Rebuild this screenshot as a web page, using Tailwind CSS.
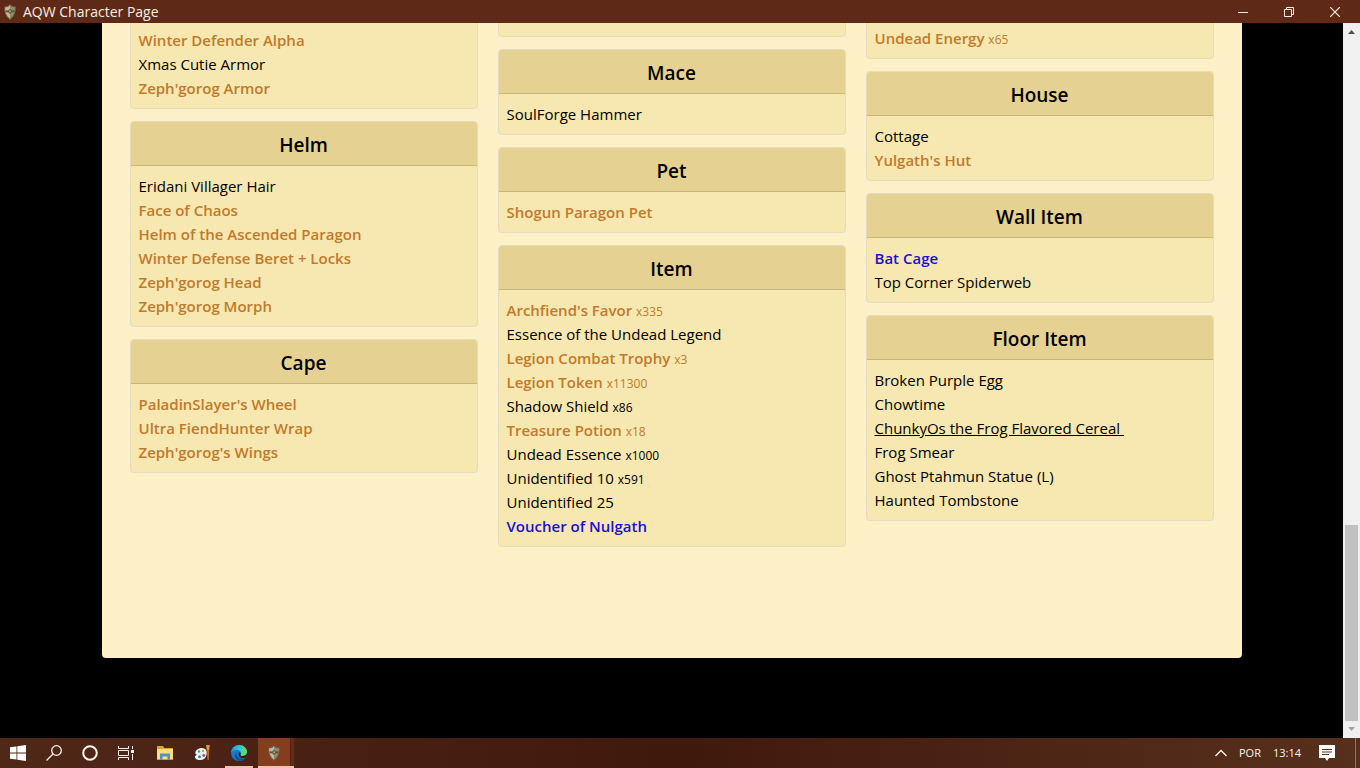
<!DOCTYPE html>
<html lang="pt">
<head>
  <meta charset="UTF-8">
  <meta name="viewport" content="width=device-width, initial-scale=1.0">
  <title>AQW Character Page</title>
  <script src="https://cdn.jsdelivr.net/npm/@tailwindcss/browser@4"></script>
</head>
<body class="flex h-screen flex-col overflow-hidden bg-black font-['Open_Sans','Noto_Sans',sans-serif] text-[15px] text-black">

  <!-- Title bar -->
  <header class="flex h-[23px] shrink-0 items-center bg-[#5e2a17] pr-[2px] text-[#fbeee0]">
    <svg class="ml-[3px] h-4 w-3.5" viewBox="0 0 14 16">
      <path d="M7 0 9 1.700 13 2.800C13 8.500 11.500 13 7 16 2.500 13 1 8.500 1 2.800L5 1.700Z" fill="#7a5a38"/>
      <path d="M7 1.300V14.700C3.500 12.300 2 8.500 2 3.600L5.400 2.700Z" fill="#bdb8a2"/>
      <path d="M7 1.300V14.700C10.500 12.300 12 8.500 12 3.600L8.600 2.700Z" fill="#8d8b78"/>
      <path d="M2.300 6.200 5 6.600 7 4.800 9 6.600 11.700 6.200 11.200 8.200 8.800 8.200 7 10 5.200 8.200 2.800 8.200Z" fill="#5f5335"/>
      <path d="M7 6 8.200 7.300 7 8.600 5.800 7.300Z" fill="#c9a65a"/>
    </svg>
    <h1 class="ml-1.5 flex-1 text-sm">AQW Character Page</h1>
    <button class="flex h-full w-[46px] items-center justify-center" aria-label="Minimize">
      <svg class="h-2.5 w-2.5" viewBox="0 0 10 10" stroke="currentColor"><path d="M0 5.500H10"/></svg>
    </button>
    <button class="flex h-full w-[46px] items-center justify-center" aria-label="Restore">
      <svg class="h-2.5 w-2.5" viewBox="0 0 10 10" fill="none" stroke="currentColor"><path d="M.5 2.500H7.500V9.500H.5ZM2.500 2.500V.5H9.500V7.500H7.500"/></svg>
    </button>
    <button class="flex h-full w-[46px] items-center justify-center" aria-label="Close">
      <svg class="h-2.5 w-2.5" viewBox="0 0 10 10" fill="none" stroke="currentColor" stroke-width="1.2"><path d="M0 0 10 10M10 0 0 10"/></svg>
    </button>
  </header>

  <div class="flex min-h-0 flex-1">
    <!-- Inventory -->
    <main class="min-w-0 flex-1 overflow-hidden">
      <div class="mx-auto grid w-full max-w-[1140px] grid-cols-3 items-start gap-5 rounded-b bg-[#fef0c6] px-7 pb-[111px]">

        <div class="flex flex-col gap-3">
          <section class="rounded-b border border-t-0 border-[#e3dcc0] bg-[#f7e7b1] px-2 pt-[5px] pb-2">
            <ul class="leading-6">
              <li><a href="#" class="font-semibold text-[#c17a2b]">Winter Defender Alpha</a></li>
              <li><a href="#">Xmas Cutie Armor</a></li>
              <li><a href="#" class="font-semibold text-[#c17a2b]">Zeph'gorog Armor</a></li>
            </ul>
          </section>
          <section class="rounded border border-[#e3dcc0] bg-[#f7e7b1]">
            <h2 class="h-11 rounded-t border-b border-[#c8b67c] bg-[#e5d292] text-center text-[19px] leading-[46px] font-semibold">Helm</h2>
            <ul class="p-2 leading-6">
              <li><a href="#">Eridani Villager Hair</a></li>
              <li><a href="#" class="font-semibold text-[#c17a2b]">Face of Chaos</a></li>
              <li><a href="#" class="font-semibold text-[#c17a2b]">Helm of the Ascended Paragon</a></li>
              <li><a href="#" class="font-semibold text-[#c17a2b]">Winter Defense Beret + Locks</a></li>
              <li><a href="#" class="font-semibold text-[#c17a2b]">Zeph'gorog Head</a></li>
              <li><a href="#" class="font-semibold text-[#c17a2b]">Zeph'gorog Morph</a></li>
            </ul>
          </section>
          <section class="rounded border border-[#e3dcc0] bg-[#f7e7b1]">
            <h2 class="h-11 rounded-t border-b border-[#c8b67c] bg-[#e5d292] text-center text-[19px] leading-[46px] font-semibold">Cape</h2>
            <ul class="p-2 leading-6">
              <li><a href="#" class="font-semibold text-[#c17a2b]">PaladinSlayer's Wheel</a></li>
              <li><a href="#" class="font-semibold text-[#c17a2b]">Ultra FiendHunter Wrap</a></li>
              <li><a href="#" class="font-semibold text-[#c17a2b]">Zeph'gorog's Wings</a></li>
            </ul>
          </section>
        </div>

        <div class="flex flex-col gap-3">
          <section class="h-3.5 rounded-b border border-t-0 border-[#e3dcc0] bg-[#f7e7b1]"></section>
          <section class="rounded border border-[#e3dcc0] bg-[#f7e7b1]">
            <h2 class="h-11 rounded-t border-b border-[#c8b67c] bg-[#e5d292] text-center text-[19px] leading-[46px] font-semibold">Mace</h2>
            <ul class="p-2 leading-6">
              <li><a href="#">SoulForge Hammer</a></li>
            </ul>
          </section>
          <section class="rounded border border-[#e3dcc0] bg-[#f7e7b1]">
            <h2 class="h-11 rounded-t border-b border-[#c8b67c] bg-[#e5d292] text-center text-[19px] leading-[46px] font-semibold">Pet</h2>
            <ul class="p-2 leading-6">
              <li><a href="#" class="font-semibold text-[#c17a2b]">Shogun Paragon Pet</a></li>
            </ul>
          </section>
          <section class="rounded border border-[#e3dcc0] bg-[#f7e7b1]">
            <h2 class="h-11 rounded-t border-b border-[#c8b67c] bg-[#e5d292] text-center text-[19px] leading-[46px] font-semibold">Item</h2>
            <ul class="p-2 leading-6">
              <li class="text-[#c17a2b]"><a href="#" class="font-semibold">Archfiend's Favor</a> <span class="text-xs">x335</span></li>
              <li><a href="#">Essence of the Undead Legend</a></li>
              <li class="text-[#c17a2b]"><a href="#" class="font-semibold">Legion Combat Trophy</a> <span class="text-xs">x3</span></li>
              <li class="text-[#c17a2b]"><a href="#" class="font-semibold">Legion Token</a> <span class="text-xs">x11300</span></li>
              <li><a href="#">Shadow Shield</a> <span class="text-xs">x86</span></li>
              <li class="text-[#c17a2b]"><a href="#" class="font-semibold">Treasure Potion</a> <span class="text-xs">x18</span></li>
              <li><a href="#">Undead Essence</a> <span class="text-xs">x1000</span></li>
              <li><a href="#">Unidentified 10</a> <span class="text-xs">x591</span></li>
              <li><a href="#">Unidentified 25</a></li>
              <li><a href="#" class="font-semibold text-[#1a10d8]">Voucher of Nulgath</a></li>
            </ul>
          </section>
        </div>

        <div class="flex flex-col gap-3">
          <section class="rounded-b border border-t-0 border-[#e3dcc0] bg-[#f7e7b1] px-2 pt-[3px] pb-2">
            <ul class="leading-6">
              <li class="text-[#c17a2b]"><a href="#" class="font-semibold">Undead Energy</a> <span class="text-xs">x65</span></li>
            </ul>
          </section>
          <section class="rounded border border-[#e3dcc0] bg-[#f7e7b1]">
            <h2 class="h-11 rounded-t border-b border-[#c8b67c] bg-[#e5d292] text-center text-[19px] leading-[46px] font-semibold">House</h2>
            <ul class="p-2 leading-6">
              <li><a href="#">Cottage</a></li>
              <li><a href="#" class="font-semibold text-[#c17a2b]">Yulgath's Hut</a></li>
            </ul>
          </section>
          <section class="rounded border border-[#e3dcc0] bg-[#f7e7b1]">
            <h2 class="h-11 rounded-t border-b border-[#c8b67c] bg-[#e5d292] text-center text-[19px] leading-[46px] font-semibold">Wall Item</h2>
            <ul class="p-2 leading-6">
              <li><a href="#" class="font-semibold text-[#1a10d8]">Bat Cage</a></li>
              <li><a href="#">Top Corner Spiderweb</a></li>
            </ul>
          </section>
          <section class="rounded border border-[#e3dcc0] bg-[#f7e7b1]">
            <h2 class="h-11 rounded-t border-b border-[#c8b67c] bg-[#e5d292] text-center text-[19px] leading-[46px] font-semibold">Floor Item</h2>
            <ul class="p-2 leading-6">
              <li><a href="#">Broken Purple Egg</a></li>
              <li><a href="#">Chowtime</a></li>
              <li><a href="#" class="underline">ChunkyOs the Frog Flavored Cereal&nbsp;</a></li>
              <li><a href="#">Frog Smear</a></li>
              <li><a href="#">Ghost Ptahmun Statue (L)</a></li>
              <li><a href="#">Haunted Tombstone</a></li>
            </ul>
          </section>
        </div>

      </div>
    </main>

    <!-- Scrollbar -->
    <div class="flex w-[17px] shrink-0 flex-col items-center bg-[#f0f0f0]">
      <svg class="h-[17px] w-[17px]" viewBox="0 0 17 17"><path d="M5 11 8.500 7 12 11Z" fill="#505050"/></svg>
      <div class="flex w-[13px] flex-1 flex-col justify-end"><div class="h-[196px] bg-[#c1c1c1]"></div></div>
      <svg class="h-[17px] w-[17px]" viewBox="0 0 17 17"><path d="M5 6 8.500 10 12 6Z" fill="#a3a3a3"/></svg>
    </div>
  </div>

  <!-- Taskbar -->
  <footer class="flex h-[30px] shrink-0 items-center bg-linear-to-r from-[#502818] via-[#40190d] to-[#57301d] pr-1 text-[#fdf3ea]">
    <button class="flex h-full w-9 items-center justify-center" aria-label="Start">
      <svg class="h-4 w-4" viewBox="0 0 16 16" fill="#fff"><path d="M0 2.300 6.500 1.400V7.500H0ZM7.300 1.300 16 0V7.500H7.300ZM0 8.400H6.500V14.600L0 13.700ZM7.300 8.400H16V16L7.300 14.700Z"/></svg>
    </button>
    <button class="flex h-full w-9 items-center justify-center" aria-label="Search">
      <svg class="h-4 w-4" viewBox="0 0 16 16" fill="none" stroke="currentColor" stroke-width="1.300"><circle cx="10.500" cy="5.500" r="4.800"/><path d="M7 9 .5 15.500"/></svg>
    </button>
    <button class="flex h-full w-9 items-center justify-center" aria-label="Cortana">
      <svg class="h-4 w-4" viewBox="0 0 16 16" fill="none" stroke="currentColor" stroke-width="2"><circle cx="8" cy="8" r="6.800"/></svg>
    </button>
    <button class="flex h-full w-9 items-center justify-center" aria-label="Task view">
      <svg class="h-4 w-4" viewBox="0 0 16 16" fill="none" stroke="currentColor"><path d="M.5 1V3.500H10.500V1M.5 15V12.500H10.500V15M.5 5.500H10.500V10.500H.5ZM14.500 1V4M14.500 9V15"/><path d="M13 5H16V8H13Z" fill="currentColor" stroke="none"/></svg>
    </button>
    <div class="ml-[3px] flex h-full gap-px">
      <button class="flex h-full w-9 items-center justify-center" aria-label="File Explorer">
        <svg class="h-4 w-4" viewBox="0 0 16 16"><path d="M0 1H6L7.500 3H16V14.500H0Z" fill="#dba33a"/><path d="M0 4H16V14.500H0Z" fill="#fbdc83"/><path d="M3 8.500H13V15H10.500V11.500H5.500V15H3Z" fill="#4c99bd"/></svg>
      </button>
      <button class="flex h-full w-9 items-center justify-center" aria-label="Paint">
        <svg class="h-4 w-4" viewBox="0 0 16 16">
          <path d="M7 3C12 2.500 13.500 6.500 12.500 10 12 14 8 15.500 4.500 15 1 14.500 0 11.500 1.800 10.600 3 10 3 9.300 1.500 8.800 .5 6 4 3.300 7 3Z" fill="#edf4f6"/>
          <circle cx="5" cy="6.500" r="1.200" fill="#43a35c"/><circle cx="9" cy="6" r="1.200" fill="#d9a22c"/><circle cx="5.500" cy="11.800" r="1.500" fill="#3e7fc4"/><circle cx="9.700" cy="10.500" r="1.400" fill="#cb4931"/>
          <path d="M12 0H15.800L15.200 5.500H12.800Z" fill="#e0944b"/><path d="M13 5.500H15.200L14.800 15H13.400Z" fill="#b9672c"/>
        </svg>
      </button>
      <button class="flex h-full w-9 items-center justify-center" aria-label="Edge">
        <span class="flex h-full w-7 items-center justify-center border-b-2 border-[#f3c3ab] pt-[2px]">
          <svg class="h-4 w-4" viewBox="0 0 16 16">
            <defs>
              <linearGradient id="edge-top" x1="0" y1="0" x2="1" y2=".3"><stop offset="0" stop-color="#1e8fdf"/><stop offset=".55" stop-color="#35c3da"/><stop offset="1" stop-color="#69dc5b"/></linearGradient>
            </defs>
            <circle cx="8" cy="8" r="8" fill="#147cca"/>
            <path d="M0 7.500C.8 3 4 0 8.200 0 13 0 16 3.500 16 6.800 16 9.500 14 11 11.700 11 10 11 9 10.300 9.500 9.400 11 7 8.500 4.800 5.500 4.900 3 5 1 6 0 7.500Z" fill="url(#edge-top)"/>
            <path d="M6.500 7C4.700 9 6 13.800 11 13.800 12.800 13.800 14 13.300 14.700 12.500 13 15.200 10.500 16 8.500 16 3.500 15.500 2.700 9 6.500 7Z" fill="#125296"/>
            <path d="M9.500 9.400C9 10.300 10 11 11.700 11 13.500 11 15 10.200 15.700 8.800L16 10 14.700 12.500C11.500 14.300 7.500 12.500 7.500 9.500 7.500 8.300 8 7.500 9 7.200 9.800 8 9.900 8.700 9.500 9.400Z" fill="#40190d"/>
          </svg>
        </span>
      </button>
      <button class="flex h-full w-9 items-center border-b-2 border-[#f3c3ab] bg-[#642b19]" aria-label="AQW Character Page">
        <span class="flex h-full w-[33px] items-center justify-center border-r border-[#552011] bg-[#853d20] pt-[2px]">
          <svg class="h-4 w-3.5" viewBox="0 0 14 16">
            <path d="M7 0 9 1.700 13 2.800C13 8.500 11.500 13 7 16 2.500 13 1 8.500 1 2.800L5 1.700Z" fill="#7a5a38"/>
            <path d="M7 1.300V14.700C3.500 12.300 2 8.500 2 3.600L5.400 2.700Z" fill="#bdb8a2"/>
            <path d="M7 1.300V14.700C10.500 12.300 12 8.500 12 3.600L8.600 2.700Z" fill="#8d8b78"/>
            <path d="M2.300 6.200 5 6.600 7 4.800 9 6.600 11.700 6.200 11.200 8.200 8.800 8.200 7 10 5.200 8.200 2.800 8.200Z" fill="#5f5335"/>
            <path d="M7 6 8.200 7.300 7 8.600 5.800 7.300Z" fill="#c9a65a"/>
          </svg>
        </span>
      </button>
    </div>

    <div class="ml-auto flex h-full items-center text-[11px]">
      <button class="flex h-full items-center px-3" aria-label="Show hidden icons">
        <svg class="h-3 w-3" viewBox="0 0 12 12" fill="none" stroke="currentColor" stroke-width="1.300"><path d="M.5 9 6 3.500 11.500 9"/></svg>
      </button>
      <button>POR</button>
      <time class="ml-3">13:14</time>
      <button class="flex h-full items-center pr-5 pl-[18px]" aria-label="Notifications">
        <svg class="h-4 w-4" viewBox="0 0 16 16"><path d="M0 0H16V13H10L8 16 6 13H0Z" fill="#fff"/><path d="M3 4.500H13M3 7H13M3 9.500H10" stroke="#57301d"/></svg>
      </button>
      <span class="h-full w-px bg-[#8f7466]"></span>
    </div>
  </footer>

</body>
</html>
